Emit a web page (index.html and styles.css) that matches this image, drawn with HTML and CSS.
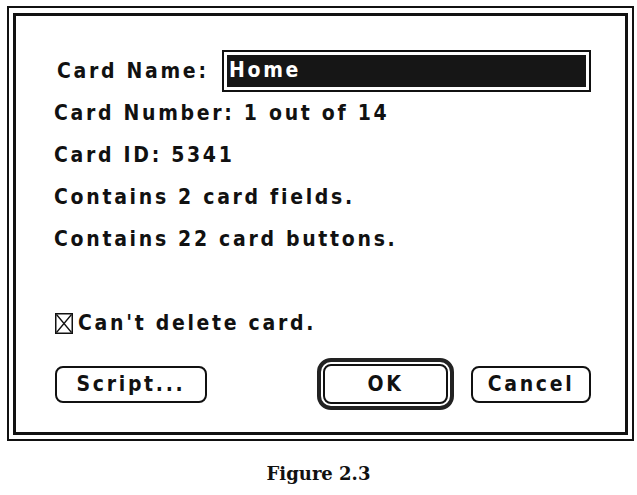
FILE: index.html
```html
<!DOCTYPE html>
<html lang="en">
<head>
    <meta charset="UTF-8">
    <meta name="viewport" content="width=device-width, initial-scale=1.0">
    <title>Card Info</title>
    <link rel="stylesheet" href="styles.css">
</head>
<body>
    <div class="dialog">
        <div class="dialog-inner">
            <div class="name-row">
                <label class="name-label" for="card-name">Card Name:</label>
                <div class="name-field">
                    <span class="name-value" id="card-name">Home</span>
                </div>
            </div>

            <p class="info">Card Number: 1 out of 14</p>
            <p class="info">Card ID: 5341</p>
            <p class="info">Contains 2 card fields.</p>
            <p class="info">Contains 22 card buttons.</p>

            <div class="check-row">
                <svg class="checkbox" width="18" height="21" viewBox="0 0 18 21">
                    <rect x="0.75" y="0.75" width="16.5" height="19.5" fill="#fff" stroke="#111" stroke-width="1.5"/>
                    <path d="M1.5 1.5 L16.5 19.5 M16.5 1.5 L1.5 19.5" stroke="#111" stroke-width="1.3"/>
                </svg>
                <span>Can't delete card.</span>
            </div>

            <div class="button-row">
                <button class="btn btn-script">Script...</button>
                <div class="default-ring">
                    <button class="btn btn-ok">OK</button>
                </div>
                <button class="btn btn-cancel">Cancel</button>
            </div>
        </div>
    </div>

    <p class="caption">Figure 2.3</p>
</body>
</html>
```

FILE: styles.css
```css
body {
    margin: 0;
    background-color: #fff;
    color: #111;
    font-family: "DejaVu Sans Condensed", "DejaVu Sans", sans-serif;
    font-weight: bold;
    font-size: 21px;
    letter-spacing: 2.7px;
}

/* double frame: thin outer line, thick inner line */
.dialog {
    width: 627px;
    margin: 6px 0 0 7px;
    border: 2px solid #111;
    padding: 5px 4px 4px 4px;
    box-sizing: border-box;
}
.dialog-inner {
    border: 3px solid #111;
    padding: 34px 34px 22px 38px;
}

.name-row {
    display: flex;
    align-items: center;
    height: 42px;
}
.name-label {
    width: 168px;
    flex-shrink: 0;
    padding-left: 3px;
    box-sizing: border-box;
}
.name-field {
    flex: 1;
    height: 42px;
    border: 2px solid #111;
    padding: 3px;
    box-sizing: border-box;
    display: flex;
}
.name-value {
    flex: 1;
    background-color: #161616;
    color: #fff;
    line-height: 30px;
    padding-left: 2px;
}

.info {
    margin: 0;
    line-height: 42px;
    height: 42px;
}

.check-row {
    display: flex;
    align-items: center;
    height: 28px;
    margin-top: 49px;
    padding-left: 1px;
}
.checkbox {
    flex-shrink: 0;
    width: 18px;
    height: 21px;
    margin-right: 5px;
}

.button-row {
    display: flex;
    align-items: center;
    height: 52px;
    margin-top: 21px;
    padding-left: 1px;
}
.btn {
    font-family: inherit;
    font-weight: bold;
    font-size: 21px;
    letter-spacing: 2.7px;
    color: #111;
    background-color: #fff;
    border: 2px solid #111;
    border-radius: 8px;
    height: 37px;
    padding: 0;
    cursor: pointer;
}
.btn-script {
    width: 152px;
}
.default-ring {
    margin-left: auto;
    border: 4px solid #222;
    border-radius: 14px;
    padding: 2px;
    display: flex;
}
.btn-ok {
    width: 125px;
    height: 40px;
}
.btn-cancel {
    width: 120px;
    margin-left: 17px;
}

.caption {
    margin: 22px 0 0;
    text-align: center;
    font-family: "DejaVu Serif", "Liberation Serif", serif;
    font-size: 18px;
    letter-spacing: 0;
    line-height: 22px;
}
```
